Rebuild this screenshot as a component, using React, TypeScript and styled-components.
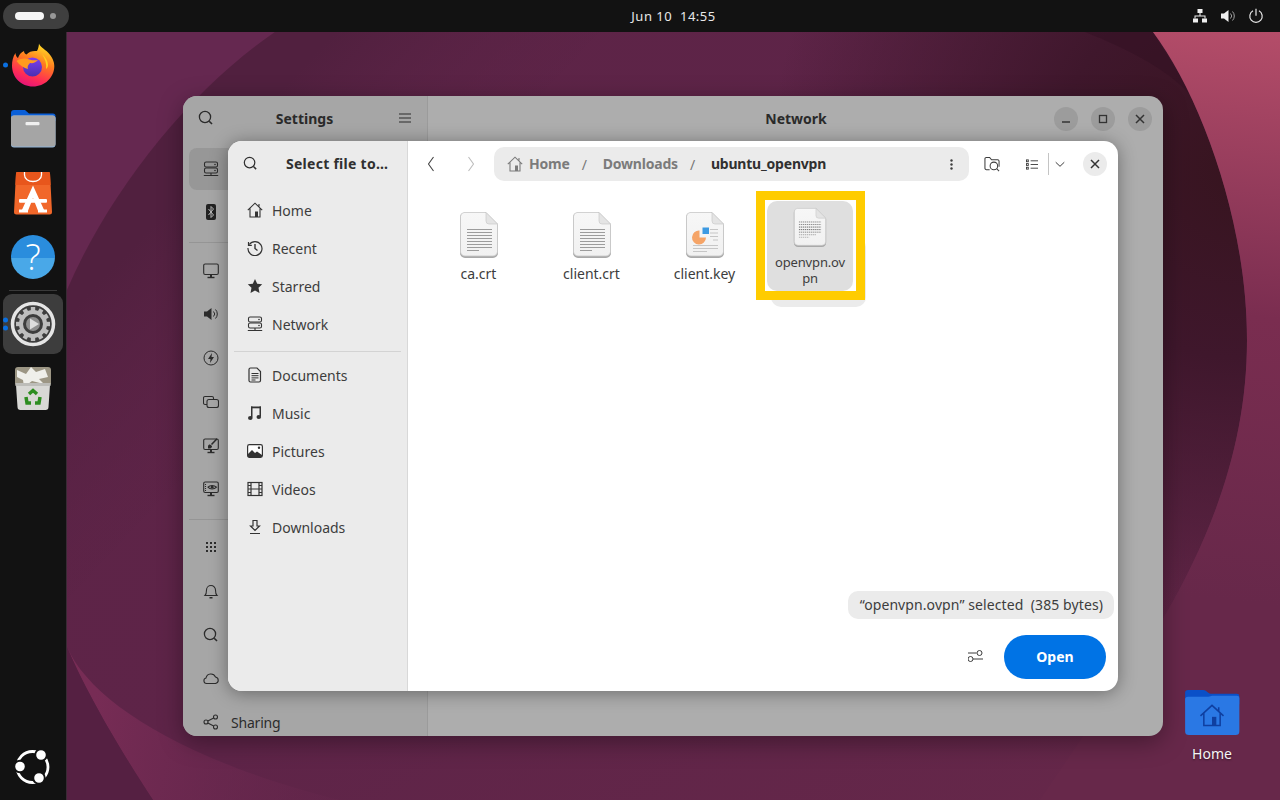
import React from 'react';
import styled, { createGlobalStyle } from 'styled-components';

const Global = createGlobalStyle`
  html, body { margin: 0; padding: 0; overflow: hidden; background: #111; }
  * { box-sizing: border-box; }
  body { font-family: "Noto Sans", "Open Sans", sans-serif; }
`;

const Screen = styled.div`
  position: relative;
  width: 1280px;
  height: 800px;
  overflow: hidden;
  display: flex;
  flex-direction: column;
`;

const TopBar = styled.header`
  height: 32px;
  flex: none;
  background: #121212;
  display: grid;
  grid-template-columns: 1fr auto 1fr;
  align-items: center;
  padding: 0 16px 0 3px;
`;

const Workspaces = styled.div`
  width: 66px;
  height: 26px;
  border-radius: 13px;
  background: #3f3f3f;
  display: flex;
  align-items: center;
  gap: 6px;
  padding: 0 11px 0 12px;
`;
const WsActive = styled.span`
  width: 29px;
  height: 8px;
  border-radius: 4px;
  background: #f6f6f6;
`;
const WsDot = styled.span`
  width: 6px;
  height: 6px;
  border-radius: 50%;
  background: #989898;
`;
const Clock = styled.div`
  color: #e8e8e8;
  font-size: 13px;
  letter-spacing: 0.5px;
  white-space: pre;
  margin-left: 80px;
`;
const Tray = styled.div`
  justify-self: end;
  display: flex;
  align-items: center;
  gap: 12px;
`;

const Body = styled.div`
  flex: 1;
  display: flex;
  min-height: 0;
`;

const Dock = styled.nav`
  width: 67px;
  flex: none;
  background: #121212;
  border-right: 1px solid #3a2a35;
  display: flex;
  flex-direction: column;
  align-items: center;
  padding-top: 1px;
`;
const DockItem = styled.div<{ $active?: boolean; $h?: number }>`
  position: relative;
  width: 60px;
  height: ${p => p.$h ?? 64}px;
  border-radius: 9px;
  background: ${p => (p.$active ? '#3d3d3d' : 'transparent')};
  display: flex;
  align-items: center;
  justify-content: center;
`;
const RunDots = styled.div`
  position: absolute;
  left: 0;
  top: 50%;
  transform: translateY(-50%);
  display: flex;
  flex-direction: column;
  gap: 3px;
`;
const RunDot = styled.span`
  width: 5px;
  height: 5px;
  border-radius: 50%;
  background: #0a6fe0;
`;
const DockSep = styled.div`
  width: 48px;
  height: 1px;
  background: #3a3a3a;
  margin: 1px 0 3px;
`;
const DockSpacer = styled.div`
  flex: 1;
`;
const UbuntuSlot = styled.div`
  height: 64px;
  width: 60px;
  display: flex;
  align-items: center;
  justify-content: center;
  margin-bottom: 1px;
`;
const HelpBadge = styled.div`
  width: 44px;
  height: 44px;
  border-radius: 50%;
  background: linear-gradient(180deg, #2a8ddd 0%, #2a8ddd 53%, #49a8e8 53%, #49a8e8 100%);
  color: #fff;
  font-family: "Open Sans", sans-serif;
  font-size: 36px;
  font-weight: 300;
  line-height: 44px;
  text-align: center;
`;

const Wall = styled.main`
  position: relative;
  flex: 1;
  background: linear-gradient(150deg, #5d2447 0%, #5e2448 55%, #67284a 100%);
`;
const WallArt = styled.svg`
  position: absolute;
  inset: 0;
  width: 100%;
  height: 100%;
`;

const DesktopIcon = styled.div`
  position: absolute;
  left: 1110px;
  top: 657px;
  width: 70px;
  display: flex;
  flex-direction: column;
  align-items: center;
  gap: 7px;
  color: #f4f4f4;
  font-size: 14px;
  text-shadow: 0 1px 2px rgba(0,0,0,.5);
`;

/* Settings window (dimmed behind the modal) */
const SettingsWin = styled.section`
  position: absolute;
  left: 116px;
  top: 64px;
  width: 980px;
  height: 640px;
  border-radius: 14px;
  background: #adadad;
  box-shadow: 0 6px 24px rgba(0,0,0,.35);
  display: flex;
  overflow: hidden;
`;
const SetSide = styled.aside`
  width: 245px;
  flex: none;
  background: #a6a6a6;
  border-right: 1px solid #9b9b9b;
  display: flex;
  flex-direction: column;
  padding: 0 6px;
`;
const SetHead = styled.div`
  height: 44px;
  flex: none;
  margin: 0 -6px;
  padding: 0 16px 0 15px;
  display: flex;
  align-items: center;
  justify-content: space-between;
  color: #2a2a2a;
  font-size: 14px;
  font-weight: 700;
`;
const SetTitle = styled.span`
  margin-right: 4px;
`;
const SetRows = styled.div`
  display: flex;
  flex-direction: column;
  margin-top: 8px;
`;
const SetRow = styled.div<{ $on?: boolean; $h?: number }>`
  height: ${p => p.$h ?? 43.75}px;
  flex: none;
  border-radius: 8px;
  padding-left: 14px;
  display: flex;
  align-items: center;
  gap: 12px;
  background: ${p => (p.$on ? '#979797' : 'transparent')};
  color: #2c2c2c;
  font-size: 14px;
  letter-spacing: -0.2px;
`;
const SetDivider = styled.div<{ $below: number }>`
  height: 1px;
  flex: none;
  background: #959595;
  margin: 8px 0 ${p => p.$below}px;
`;
const SetMain = styled.div`
  flex: 1;
  display: flex;
  flex-direction: column;
`;
const SetMainHead = styled.div`
  height: 44px;
  display: grid;
  grid-template-columns: 1fr auto 1fr;
  align-items: center;
  padding: 0 11px 0 12px;
  color: #2a2a2a;
  font-size: 14px;
  font-weight: 700;
`;
const WinBtns = styled.div`
  justify-self: end;
  display: flex;
  gap: 13px;
  margin-top: 2px;
`;
const WinBtn = styled.div`
  width: 24px;
  height: 24px;
  border-radius: 50%;
  background: #9c9c9c;
  display: flex;
  align-items: center;
  justify-content: center;
`;

/* File chooser */
const Chooser = styled.section`
  position: absolute;
  left: 161px;
  top: 109px;
  width: 890px;
  height: 550px;
  border-radius: 14px;
  background: #fff;
  box-shadow: 0 2px 18px rgba(0,0,0,.38);
  display: flex;
  overflow: hidden;
`;
const Places = styled.aside`
  width: 180px;
  flex: none;
  background: #ebebeb;
  border-right: 1px solid #d8d8d8;
  display: flex;
  flex-direction: column;
`;
const PlacesHead = styled.div`
  height: 46px;
  flex: none;
  display: flex;
  align-items: center;
  padding: 0 0 2px 15px;
  gap: 28px;
  color: #303030;
  font-size: 14px;
  font-weight: 700;
  letter-spacing: 0.27px;
  white-space: nowrap;
`;
const PlaceList = styled.div`
  display: flex;
  flex-direction: column;
  padding-top: 4px;
`;
const Place = styled.div`
  height: 38px;
  display: flex;
  align-items: center;
  padding-left: 18px;
  gap: 8px;
  color: #3d3d3d;
  font-size: 14px;
`;
const PlaceIcon = styled.span`
  width: 18px;
  display: flex;
  justify-content: center;
`;
const PlaceSep = styled.div`
  height: 1px;
  background: #d3d3d3;
  margin: 8px 6px 4px;
`;

const Content = styled.div`
  flex: 1;
  min-width: 0;
  display: flex;
  flex-direction: column;
`;
const Toolbar = styled.div`
  height: 46px;
  flex: none;
  display: flex;
  align-items: center;
  padding: 0 11px 0 19px;
`;
const NavBtn = styled.span<{ $w: number }>`
  width: ${p => p.$w}px;
  flex: none;
  display: flex;
`;
const PathBar = styled.div`
  width: 475px;
  height: 34px;
  flex: none;
  border-radius: 10px;
  background: #ebebeb;
  display: flex;
  align-items: center;
  padding: 0 16px 0 13px;
  color: #7b7b7b;
  font-size: 14px;
  font-weight: 700;
  letter-spacing: -0.2px;
`;
const Crumb = styled.span<{ $cur?: boolean; $first?: boolean }>`
  color: ${p => (p.$cur ? '#303030' : '#7b7b7b')};
  margin: 0 0 1px ${p => (p.$first ? 6 : 4)}px;
`;
const Slash = styled.span`
  color: #777;
  font-weight: 400;
  margin: 0 12px;
`;
const PathMenu = styled.span`
  margin-left: auto;
  display: flex;
`;
const ToolRight = styled.div`
  margin-left: auto;
  display: flex;
  align-items: center;
`;
const ToolGap = styled.span`
  width: 26px;
`;
const Divider = styled.span`
  width: 1px;
  height: 22px;
  background: #c4c4c4;
  margin: 0 6px 0 10px;
`;
const CloseBtn = styled.div`
  width: 24px;
  height: 24px;
  border-radius: 50%;
  background: #ebebeb;
  display: flex;
  align-items: center;
  justify-content: center;
  margin-left: 18px;
`;
const FileArea = styled.div`
  position: relative;
  flex: 1;
  padding: 24px 0 0 14px;
  display: flex;
  align-items: flex-start;
`;
const FileCell = styled.div`
  width: 113px;
  display: flex;
  flex-direction: column;
  align-items: center;
  color: #3d3d3d;
  font-size: 14px;
  line-height: 16px;
  text-align: center;
`;
const FileLabel = styled.div`
  margin-top: 7px;
`;
const Ghost = styled.div`
  position: absolute;
  left: 363px;
  top: 50px;
  width: 95px;
  height: 70px;
  border-radius: 10px;
  background: #ebebeb;
`;
const Highlight = styled.div`
  position: absolute;
  left: 348px;
  top: 4px;
  width: 109px;
  height: 109px;
  border: 9px solid #ffcc00;
  background: #fff;
  padding: 1px 0 0 2px;
`;
const SelectedCell = styled.div`
  width: 86px;
  height: 90px;
  border-radius: 10px;
  background: #dfdfdf;
  color: #3d3d3d;
  font-size: 13px;
  line-height: 16px;
  letter-spacing: -0.15px;
  text-align: center;
  display: flex;
  flex-direction: column;
  align-items: center;
  padding-top: 6px;
`;
const SelLabel = styled.div`
  width: 74px;
  margin-top: 6px;
  word-break: break-all;
`;
const Status = styled.div`
  position: absolute;
  right: 4px;
  top: 404px;
  height: 28px;
  padding: 0 11px 2px 12px;
  border-radius: 10px;
  background: #ebebeb;
  color: #3d3d3d;
  font-size: 14px;
  letter-spacing: 0.09px;
  display: flex;
  align-items: center;
  white-space: pre;
`;
const Footer = styled.div`
  height: 58px;
  flex: none;
  display: flex;
  align-items: flex-start;
  justify-content: flex-end;
  padding: 2px 12px 0 0;
  gap: 21px;
`;
const FilterBtn = styled.span`
  display: flex;
  margin-top: 15px;
`;
const OpenBtn = styled.div`
  width: 102px;
  height: 44px;
  padding-bottom: 2px;
  border-radius: 22px;
  background: #0073e5;
  color: #fff;
  font-size: 14px;
  font-weight: 700;
  display: flex;
  align-items: center;
  justify-content: center;
`;

const Search = ({ c = '#333', s = 16 }: { c?: string; s?: number }) => (
  <svg width={s} height={s} viewBox="0 0 16 16" fill="none" stroke={c} strokeWidth="1.3">
    <circle cx="7" cy="7" r="5.6" />
    <path d="M11.2 11.2 14 14" strokeWidth="1.6" />
  </svg>
);
const Xmark = ({ c = '#333' }: { c?: string }) => (
  <svg width="10" height="10" viewBox="0 0 10 10" stroke={c} strokeWidth="1.5"><path d="M1 1l8 8M9 1l-8 8" /></svg>
);
const HomeIco = ({ c = '#333', s = 16 }: { c?: string; s?: number }) => (
  <svg width={s} height={s} viewBox="0 0 16 16" fill="none" stroke={c} strokeWidth="1.1">
    <path d="M.8 8.2 8 1.2l7.2 7M3 6.6V15h10V6.6M12 2v2.6" />
    <rect x="8" y="9.5" width="3" height="5.5" fill={c} stroke="none" />
  </svg>
);
const NetIco = ({ c = '#333' }: { c?: string }) => (
  <svg width="16" height="16" viewBox="0 0 16 16" fill="none" stroke={c} strokeWidth="1.1">
    <rect x="1.5" y="1" width="13" height="5" rx="1.6" />
    <rect x="1.5" y="7" width="13" height="5" rx="1.6" />
    <path d="M0.8 14.5h14.4M8 12v2.5" />
    <circle cx="12" cy="3.5" r=".8" fill={c} stroke="none" /><circle cx="12" cy="9.5" r=".8" fill={c} stroke="none" />
  </svg>
);
const Monitor = ({ c = '#2c2c2c', children }: { c?: string; children?: React.ReactNode }) => (
  <svg width="16" height="16" viewBox="0 0 16 16" fill="none" stroke={c} strokeWidth="1.1">
    <rect x=".7" y="1" width="14.6" height="10.5" rx="1.4" />
    <path d="M4.5 14.5h7" strokeWidth="1.4" /><path d="M7 11.5h2v3H7z" fill={c} stroke="none" />
    {children}
  </svg>
);
const Dots = () => (
  <svg width="3" height="11" viewBox="0 0 3 11" fill="#3d3d3d"><circle cx="1.5" cy="1.5" r="1.2" /><circle cx="1.5" cy="5.5" r="1.2" /><circle cx="1.5" cy="9.5" r="1.2" /></svg>
);

const DocIcon = ({ kind, w = 40, h = 48 }: { kind: 'text' | 'pie' | 'dense'; w?: number; h?: number }) => (
  <svg width={w} height={h} viewBox="0 0 40 48">
    <defs>
      <linearGradient id={`pg-${kind}`} x1="0" y1="0" x2="0" y2="1">
        <stop offset="0" stopColor="#f7f7f7" /><stop offset="1" stopColor="#f1f1f1" />
      </linearGradient>
    </defs>
    <path d="M5 1.5h22l12 12V41a5 5 0 0 1-5 5H6a5 5 0 0 1-5-5V5.5a4 4 0 0 1 4-4z" fill="#a9a9a9" transform="translate(0 .9)" />
    <path d="M5 1.5h22l11.500 11.500V40.500a4.500 4.500 0 0 1-4.500 4.500H6a4.500 4.500 0 0 1-4.500-4.500V5.500a4 4 0 0 1 3.500-4z" fill={`url(#pg-${kind})`} stroke="#c8c8c8" strokeWidth=".8" />
    <path d="M27 1.500 38.500 13H30a3 3 0 0 1-3-3z" fill="#e4e4e4" stroke="#c4c4c4" strokeWidth=".6" />
    {kind === 'text' && (
      <g stroke="#9c9c9c" strokeWidth="1">
        {[18.500, 21.500, 24.500, 27.500, 30.500, 33.500, 36.500].map(y => <path key={y} d={`M8 ${y}h25`} />)}
        <path d="M8 39.500h12" />
      </g>
    )}
    {kind === 'pie' && (
      <g>
        <g stroke="#c6c6c6" strokeWidth="1">
          <path d="M25 18.500h8M25 22h8M25 25.500h8M28 29h5" />
          <path d="M8 34.500h25M8 37.500h25M8 40.500h14" />
        </g>
        <path d="M15.500 18v7h6.500a7 7 0 1 1-6.500-7z" transform="translate(-1 1.500)" fill="#f5a467" />
        <path d="M17.500 16.500h6.500v6.500h-6.500z" fill="#3d9ae2" />
      </g>
    )}
    {kind === 'dense' && (
      <g stroke="#555" strokeWidth="1" strokeDasharray="1.500 .8">
        <path d="M7 17.500h26M7 20.500h26" stroke="#7a7a7a" />
        <path d="M7 23.500h26M7 26.500h26" />
        <path d="M7 29.500h26" stroke="#7a7a7a" />
        <path d="M7 32.500h20" stroke="#999" />
        <path d="M7 35.500h12" stroke="#aaa" />
      </g>
    )}
  </svg>
);

const Firefox = () => (
  <svg width="44" height="44" viewBox="0 0 44 44">
    <defs>
      <linearGradient id="ff1" x1=".7" y1="0" x2=".3" y2="1">
        <stop offset="0" stopColor="#ffe226" /><stop offset=".4" stopColor="#ff7a1f" /><stop offset=".75" stopColor="#ff2d55" /><stop offset="1" stopColor="#e3127c" />
      </linearGradient>
      <linearGradient id="ff2" x1=".5" y1="0" x2=".5" y2="1">
        <stop offset="0" stopColor="#7d3ff0" /><stop offset="1" stopColor="#4a2fb0" />
      </linearGradient>
    </defs>
    <path d="M28 .5c1 3.500 5 5 9 9 4.500 4.500 6.300 9.500 6.300 13.500 0 11.500-9.500 20.500-21.300 20.500C10.200 43.500 1 34.500 1 22.500 1 18 2 13.500 4.500 10c.2 2.500 1 4 2.500 5 1-3.500 3-5.500 6-7 0 2 1 3 2.500 3.500C18 8.500 22 7.500 26 8c1-2 1.800-4.500 2-7.500z" fill="url(#ff1)" />
    <path d="M31 11c3.500 3 6 7 6 11 0 2-1 3-2 4 1-5-1-10-4-15z" fill="#ffd21f" />
    <circle cx="21.500" cy="24" r="9.500" fill="url(#ff2)" />
    <path d="M5.500 18c4-3 9-3 13-1.500 3 1 6 1 8.500 .5-2 2.500-5 3.500-8 3-2 2-3 4-2 6-4-1-8.500-3.500-11.500-8z" fill="#ff9a1f" />
  </svg>
);
const Files = () => (
  <svg width="46" height="40" viewBox="0 0 46 40">
    <path d="M1 4a3 3 0 0 1 3-3h11l4 3.500h24a2.500 2.500 0 0 1 2.500 2.500V12H1z" fill="#0a5fd8" />
    <rect x="1" y="6.500" width="44.500" height="32" rx="3" fill="#8fb2d6" />
    <rect x="1" y="6.500" width="44.500" height="31" rx="3" fill="#a5a5a5" />
    <rect x="15.500" y="13" width="14" height="3.200" rx="1" fill="#f0f0f0" />
  </svg>
);
const Store = () => (
  <svg width="38" height="44" viewBox="0 0 38 44">
    <path d="M3.500 1h31a1.500 1.500 0 0 1 1.500 1.300l2 38.700a2.500 2.500 0 0 1-2.500 2.500H2.500A2.500 2.500 0 0 1 0 41L2 2.300A1.500 1.500 0 0 1 3.500 1z" fill="#f1672a" />
    <path d="M3.500 1h31a1.500 1.500 0 0 1 1.500 1.300l.6 11.700H1.400L2 2.300A1.500 1.500 0 0 1 3.500 1z" fill="#e8561c" />
    <path d="M10.500 1v3c0 4 4 6.500 8.500 6.500s8.500-2.500 8.500-6.500V1" fill="none" stroke="#fff" strokeWidth="1.300" />
    <path d="M19 14.500 7 41h6.500L19 27l5.500 14H31z" fill="#fff" />
    <rect x="5" y="28" width="28" height="3.800" rx="1" fill="#fff" />
    <path d="M5 38.500h9v3H5zM24 38.500h9v3h-9z" fill="#fff" />
  </svg>
);
const Gear = () => {
  const teeth = Array.from({ length: 12 }, (_, i) => i * 30);
  return (
    <svg width="46" height="46" viewBox="0 0 46 46">
      <circle cx="23" cy="23" r="20.500" fill="#3d3d3d" stroke="#e5e5e5" strokeWidth="3.500" />
      {teeth.map(a => <rect key={a} x="20.800" y="6" width="4.400" height="6" fill="#bdbdbd" transform={`rotate(${a} 23 23)`} />)}
      <circle cx="23" cy="23" r="12" fill="none" stroke="#bdbdbd" strokeWidth="4" />
      <circle cx="23" cy="23" r="7" fill="#8f8f8f" />
      <path d="M20 17.500 29 23l-9 5.500z" fill="#dedede" />
    </svg>
  );
};
const Trash = () => (
  <svg width="38" height="46" viewBox="0 0 38 46">
    <rect x="1" y="2" width="36" height="19" rx="3" fill="#9c9684" />
    <path d="M3 5l9 4 5-7 5 5 9-3 3 8-9 2 5 5-12-3-8 6-1-7-6-3z" fill="#efefea" />
    <path d="M2 20h34l-1.500 22a3 3 0 0 1-3 3h-25a3 3 0 0 1-3-3z" fill="#d8d8d5" />
    <path d="M1.500 18h35v3h-35z" fill="#bdbdb9" />
    <g fill="none" stroke="#2d8d20" strokeWidth="3.500">
      <path d="M15 29l4-3.500 4 3.500" /><path d="M26 32l-1 6h-4" /><path d="M17 38h-4l-1-6" />
    </g>
  </svg>
);
const UbuntuLogo = () => (
  <svg width="36" height="36" viewBox="0 0 36 36">
    <circle cx="17.500" cy="18" r="15.500" fill="none" stroke="#fff" strokeWidth="2.800" />
    <circle cx="5" cy="17.500" r="5.800" fill="#fff" stroke="#121212" strokeWidth="2" />
    <circle cx="26" cy="6" r="5.800" fill="#fff" stroke="#121212" strokeWidth="2" />
    <circle cx="24" cy="29" r="5.800" fill="#fff" stroke="#121212" strokeWidth="2" />
  </svg>
);
const HomeFolder = () => (
  <svg width="56" height="48" viewBox="0 0 58 50">
    <path d="M1 4a3 3 0 0 1 3-3h16c2 0 3 1 4.500 2.500S27 5 29 5h26a2.500 2.500 0 0 1 2.500 2.500V16H1z" fill="#0a50c8" />
    <path d="M1 11a3 3 0 0 1 3-3h21c2 0 3-1 4-1h26a2.500 2.500 0 0 1 2.500 2.500V44a4 4 0 0 1-4 4H5a4 4 0 0 1-4-4z" fill="#2a78e4" />
    <path d="M17 28 29 17l12 11M20.500 25v13h17V25M36 19v4" fill="none" stroke="#0f3fa0" strokeWidth="1.600" />
    <rect x="29" y="29" width="4.500" height="9" fill="#0f3fa0" />
  </svg>
);

const places1: [string, React.ReactNode][] = [
  ['Home', <HomeIco />],
  ['Recent', (
    <svg width="16" height="16" viewBox="0 0 16 16" fill="none" stroke="#333" strokeWidth="1.200">
      <path d="M2.300 4.500A7 7 0 1 1 1 8" /><path d="M1.500 2v3.300h3.300" /><path d="M8 4v4.500l2.500 2" strokeWidth="1.400" />
    </svg>
  )],
  ['Starred', (
    <svg width="16" height="16" viewBox="0 0 16 16" fill="#333"><path d="M8 1l2.200 4.700 5 .6-3.700 3.500 1 5.100L8 12.400l-4.500 2.500 1-5.100L.8 6.300l5-.6z" /></svg>
  )],
  ['Network', <NetIco />],
];
const places2: [string, React.ReactNode][] = [
  ['Documents', (
    <svg width="16" height="16" viewBox="0 0 16 16" fill="none" stroke="#333" strokeWidth="1.200">
      <path d="M3.500 1h6.500l3.500 3.500V13.500a1.500 1.500 0 0 1-1.500 1.500H3.500A1.500 1.500 0 0 1 2 13.500v-11A1.500 1.500 0 0 1 3.500 1z" />
      <path d="M4.500 6.500h7M4.500 8.700h7M4.500 10.900h7M4.500 13h4" strokeWidth="1" />
    </svg>
  )],
  ['Music', (
    <svg width="16" height="16" viewBox="0 0 16 16" fill="#333">
      <rect x="4" y="1.500" width="10" height="1.800" /><rect x="4" y="1.500" width="1.500" height="11" /><rect x="12.500" y="1.500" width="1.500" height="10" />
      <ellipse cx="3.300" cy="13" rx="2.300" ry="1.900" /><ellipse cx="11.800" cy="12" rx="2.300" ry="1.900" />
    </svg>
  )],
  ['Pictures', (
    <svg width="16" height="16" viewBox="0 0 16 16">
      <rect x=".6" y="1.600" width="14.800" height="12.800" rx="1.800" fill="#fff" stroke="#333" strokeWidth="1.200" />
      <path d="M1 14v-3l4-4 3 3 2-1.500 5 3.500v2z" fill="#333" /><circle cx="12" cy="4.800" r="1.200" fill="#333" />
    </svg>
  )],
  ['Videos', (
    <svg width="16" height="16" viewBox="0 0 16 16" fill="none" stroke="#333" strokeWidth="1.200">
      <rect x="1" y="1.500" width="14" height="13" /><path d="M4 1.500v13M12 1.500v13M4 8h8M1 4.500h3M1 8h3M1 11.500h3M12 4.500h3M12 8h3M12 11.500h3" />
    </svg>
  )],
  ['Downloads', (
    <svg width="16" height="16" viewBox="0 0 16 16" fill="none" stroke="#333" strokeWidth="1.200">
      <path d="M6 1.500h4v5.500h2.500L8 11.500 3.500 7H6zM3 14.500h10" />
    </svg>
  )],
];

const setRowsA: React.ReactNode[] = [
  <Monitor />,
  <svg width="16" height="16" viewBox="0 0 16 16" fill="#2c2c2c"><path d="M1 5.500h3L8.500 2v12L4 10.500H1z" /><path d="M10.500 5.500a3.500 3.500 0 0 1 0 5M12.500 3.500a6.500 6.500 0 0 1 0 9" fill="none" stroke="#2c2c2c" strokeWidth="1" /></svg>,
  <svg width="16" height="16" viewBox="0 0 16 16" fill="none" stroke="#2c2c2c" strokeWidth="1"><circle cx="8" cy="8" r="7" /><path d="M9 3 5 9h2.500L7 13l4-6H8.500z" fill="#2c2c2c" stroke="none" /></svg>,
  <svg width="16" height="16" viewBox="0 0 16 16" fill="none" stroke="#2c2c2c" strokeWidth="1.100"><rect x="4" y="5.500" width="11.500" height="8" rx="2" /><path d="M4 10.500H2A1.500 1.500 0 0 1 .5 9V4A1.500 1.500 0 0 1 2 2.500h7A1.500 1.500 0 0 1 10.500 4v1.500" /></svg>,
  <Monitor><path d="M5 8.500c0-1.500 1-2 2-2l2 1.500c0 1.500-1 2.500-2 2.500H5z" fill="#2c2c2c" stroke="none" /><path d="M8.500 6.500 14 .8" strokeWidth="1.600" /></Monitor>,
  <Monitor><path d="M5 6.200c2-2.300 6-2.300 8.500 0-2.500 2.400-6.500 2.400-8.500 0z" /><circle cx="9.200" cy="6.200" r="1.400" fill="#2c2c2c" stroke="none" /><path d="M2.500 3v7" strokeDasharray="1 1" /></Monitor>,
];
const setRowsB: React.ReactNode[] = [
  <svg width="16" height="16" viewBox="0 0 16 16" fill="#2c2c2c">{[3, 7, 11].flatMap(y => [3, 7, 11].map(x => <rect key={`${x}-${y}`} x={x} y={y} width="2" height="2" />))}</svg>,
  <svg width="16" height="16" viewBox="0 0 16 16" fill="none" stroke="#2c2c2c" strokeWidth="1.100"><path d="M2 12.500c1.500-1.500 1.500-3 1.500-5.500a4.500 4.500 0 0 1 9 0c0 2.500 0 4 1.500 5.500z" /><path d="M6.500 14.800h3" strokeWidth="1.600" /></svg>,
  <Search c="#2c2c2c" />,
  <svg width="16" height="16" viewBox="0 0 16 16" fill="none" stroke="#2c2c2c" strokeWidth="1.100"><path d="M3.500 13.500a2.800 2.800 0 0 1-.5-5.500 5 5 0 0 1 9.500-1 3.300 3.300 0 0 1 0 6.500z" /></svg>,
];

export default function App() {
  return (
    <Screen>
      <Global />
      <TopBar>
        <Workspaces><WsActive /><WsDot /></Workspaces>
        <Clock>Jun 10  14:55</Clock>
        <Tray>
          <svg width="16" height="16" viewBox="0 0 16 16" fill="#f0f0f0"><rect x="5.500" y="1" width="5" height="4" /><rect x="1" y="10.500" width="5" height="4" /><rect x="10" y="10.500" width="5" height="4" /><path d="M7.500 5h1v2.500h5v3h-1v-2h-9v2h-1v-3h5z" /></svg>
          <svg width="16" height="16" viewBox="0 0 16 16" fill="#f0f0f0"><path d="M1 5.500h3L8.500 2v12L4 10.500H1z" /><path d="M10.500 5.500a3.500 3.500 0 0 1 0 5M12.500 3.500a6.500 6.500 0 0 1 0 9" fill="none" stroke="#a0a0a0" strokeWidth="1" /></svg>
          <svg width="16" height="16" viewBox="0 0 16 16" fill="none" stroke="#e8e8e8" strokeWidth="1.200"><path d="M5 2.800a6.200 6.200 0 1 0 6 0M8 .8v7" /></svg>
        </Tray>
      </TopBar>
      <Body>
        <Dock>
          <DockItem><RunDots><RunDot /></RunDots><Firefox /></DockItem>
          <DockItem><Files /></DockItem>
          <DockItem><Store /></DockItem>
          <DockItem><HelpBadge>?</HelpBadge></DockItem>
          <DockSep />
          <DockItem $active $h={60}><RunDots><RunDot /><RunDot /></RunDots><Gear /></DockItem>
          <DockItem $h={68}><Trash /></DockItem>
          <DockSpacer />
          <UbuntuSlot><UbuntuLogo /></UbuntuSlot>
        </Dock>
        <Wall>
          <WallArt viewBox="67 32 1213 768" preserveAspectRatio="none">
            <defs>
              <linearGradient id="wl" gradientUnits="userSpaceOnUse" x1="1280" y1="32" x2="1220" y2="600">
                <stop offset="0" stopColor="#b44d69" />
                <stop offset=".5" stopColor="#7a2d50" />
                <stop offset="1" stopColor="#67284a" />
              </linearGradient>
              <radialGradient id="wd" gradientUnits="userSpaceOnUse" cx="1240" cy="170" r="470">
                <stop offset="0" stopColor="#37141f" />
                <stop offset=".4" stopColor="#3f172c" />
                <stop offset=".8" stopColor="#3f172c" stopOpacity=".35" />
                <stop offset="1" stopColor="#3f172c" stopOpacity="0" />
              </radialGradient>
              <linearGradient id="wc" gradientUnits="userSpaceOnUse" x1="110" y1="270" x2="290" y2="440">
                <stop offset="0" stopColor="#51203f" />
                <stop offset="1" stopColor="#5e2448" stopOpacity="0" />
              </linearGradient>
              <linearGradient id="wp" gradientUnits="userSpaceOnUse" x1="90" y1="720" x2="420" y2="790">
                <stop offset="0" stopColor="#772c55" />
                <stop offset="1" stopColor="#62264b" stopOpacity="0" />
              </linearGradient>
            </defs>
            <path d="M67 32H275C190 90 110 190 67 290z" fill="#652850" />
            <path d="M67 290C110 190 190 90 275 32H600L67 600z" fill="url(#wc)" />
            <path d="M700 32H1153C1200 95 1247 220 1247 340 1247 440 1215 530 1163 619 1100 720 900 800 800 800z" fill="url(#wd)" />
            <path d="M1085 32C1130 50 1170 70 1195 100L1153 32z" fill="#2f1020" opacity=".4" />
            <path d="M1153 32C1200 95 1247 220 1247 340 1247 440 1215 530 1163 619L1040 800H1280V32z" fill="url(#wl)" />
            <path d="M67 647C90 700 180 760 340 800H153C120 750 85 690 67 647z" fill="url(#wp)" />
            <path d="M67 647C85 690 120 750 153 800H67z" fill="#552042" />
          </WallArt>
          <SettingsWin>
            <SetSide>
              <SetHead>
                <Search c="#2a2a2a" />
                <SetTitle>Settings</SetTitle>
                <svg width="12" height="10" viewBox="0 0 12 10" stroke="#2a2a2a" strokeWidth="1"><path d="M0 1h12M0 5h12M0 9h12" /></svg>
              </SetHead>
              <SetRows>
                <SetRow $on $h={42}><NetIco c="#2c2c2c" /></SetRow>
                <SetRow>
                  <svg width="16" height="16" viewBox="0 0 16 16"><rect x="3" y="0" width="10" height="16" rx="2" fill="#222" /><path d="M5.500 5 10.500 11 8 13.500V2.500L10.500 5 5.500 11" fill="none" stroke="#bbb" strokeWidth="1" /></svg>
                </SetRow>
                <SetDivider $below={6} />
                {setRowsA.map((n, i) => <SetRow key={i}>{n}</SetRow>)}
                <SetDivider $below={5} />
                {setRowsB.map((n, i) => <SetRow key={i}>{n}</SetRow>)}
                <SetRow>
                  <svg width="16" height="16" viewBox="0 0 16 16" fill="none" stroke="#2c2c2c" strokeWidth="1.100"><circle cx="3" cy="8" r="2" /><circle cx="12.500" cy="3" r="2" /><circle cx="12.500" cy="13" r="2" /><path d="M4.800 7 10.700 4M4.800 9l5.900 3" /></svg>
                  <span>Sharing</span>
                </SetRow>
              </SetRows>
            </SetSide>
            <SetMain>
              <SetMainHead>
                <span />
                <span>Network</span>
                <WinBtns>
                  <WinBtn><svg width="10" height="10" viewBox="0 0 10 10" stroke="#333" strokeWidth="1.300"><path d="M1 8h8" /></svg></WinBtn>
                  <WinBtn><svg width="10" height="10" viewBox="0 0 10 10" fill="none" stroke="#333" strokeWidth="1.300"><rect x="1.500" y="1.500" width="7" height="7" /></svg></WinBtn>
                  <WinBtn><Xmark /></WinBtn>
                </WinBtns>
              </SetMainHead>
            </SetMain>
          </SettingsWin>

          <Chooser>
            <Places>
              <PlacesHead><Search c="#303030" s={15} /><span>Select file to…</span></PlacesHead>
              <PlaceList>
                {places1.map(([t, n]) => <Place key={t}><PlaceIcon>{n}</PlaceIcon>{t}</Place>)}
                <PlaceSep />
                {places2.map(([t, n]) => <Place key={t}><PlaceIcon>{n}</PlaceIcon>{t}</Place>)}
              </PlaceList>
            </Places>
            <Content>
              <Toolbar>
                <NavBtn $w={40}><svg width="8" height="16" viewBox="0 0 8 16" fill="none" stroke="#444" strokeWidth="1.100"><path d="M6.500 1 1.500 8l5 7" /></svg></NavBtn>
                <NavBtn $w={27}><svg width="8" height="16" viewBox="0 0 8 16" fill="none" stroke="#bdbdbd" strokeWidth="1.100"><path d="M1.500 1l5 7-5 7" /></svg></NavBtn>
                <PathBar>
                  <HomeIco c="#7b7b7b" />
                  <Crumb $first>Home</Crumb><Slash>/</Slash>
                  <Crumb>Downloads</Crumb><Slash>/</Slash>
                  <Crumb $cur>ubuntu_openvpn</Crumb>
                  <PathMenu><Dots /></PathMenu>
                </PathBar>
                <ToolRight>
                  <svg width="16" height="16" viewBox="0 0 17 16" fill="none" stroke="#3d3d3d" strokeWidth="1.100"><path d="M6 14H2.500A1.500 1.500 0 0 1 1 12.500v-10A1.500 1.500 0 0 1 2.500 1H6l2 2.500h6.500A1.500 1.500 0 0 1 16 5v6" /><circle cx="10.500" cy="10" r="4" /><path d="M13.500 13l2.500 2.500" /></svg>
                  <ToolGap />
                  <svg width="12" height="11" viewBox="0 0 13 11" fill="none" stroke="#3d3d3d" strokeWidth="1"><rect x=".5" y=".5" width="2" height="2" /><rect x=".5" y="4.500" width="2" height="2" /><rect x=".5" y="8.500" width="2" height="2" /><path d="M5 1.500h8M5 5.500h8M5 9.500h8" /></svg>
                  <Divider />
                  <svg width="10" height="7" viewBox="0 0 11 7" fill="none" stroke="#3d3d3d" strokeWidth="1.100"><path d="M.8 1 5.500 5.500 10.200 1" /></svg>
                  <CloseBtn><Xmark /></CloseBtn>
                </ToolRight>
              </Toolbar>
              <FileArea>
                <FileCell><DocIcon kind="text" /><FileLabel>ca.crt</FileLabel></FileCell>
                <FileCell><DocIcon kind="text" /><FileLabel>client.crt</FileLabel></FileCell>
                <FileCell><DocIcon kind="pie" /><FileLabel>client.key</FileLabel></FileCell>
                <Ghost />
                <Highlight>
                  <SelectedCell><DocIcon kind="dense" w={34} h={41} /><SelLabel>openvpn.ovpn</SelLabel></SelectedCell>
                </Highlight>
                <Status>“openvpn.ovpn” selected  (385 bytes)</Status>
              </FileArea>
              <Footer>
                <FilterBtn>
                  <svg width="15" height="12" viewBox="0 0 15 12" fill="none" stroke="#3d3d3d" strokeWidth="1"><path d="M0 3h8.500M5 9h10" /><circle cx="11.500" cy="3" r="2.500" /><circle cx="2.500" cy="9" r="2.500" /></svg>
                </FilterBtn>
                <OpenBtn>Open</OpenBtn>
              </Footer>
            </Content>
          </Chooser>

          <DesktopIcon><HomeFolder /><span>Home</span></DesktopIcon>
        </Wall>
      </Body>
    </Screen>
  );
}
